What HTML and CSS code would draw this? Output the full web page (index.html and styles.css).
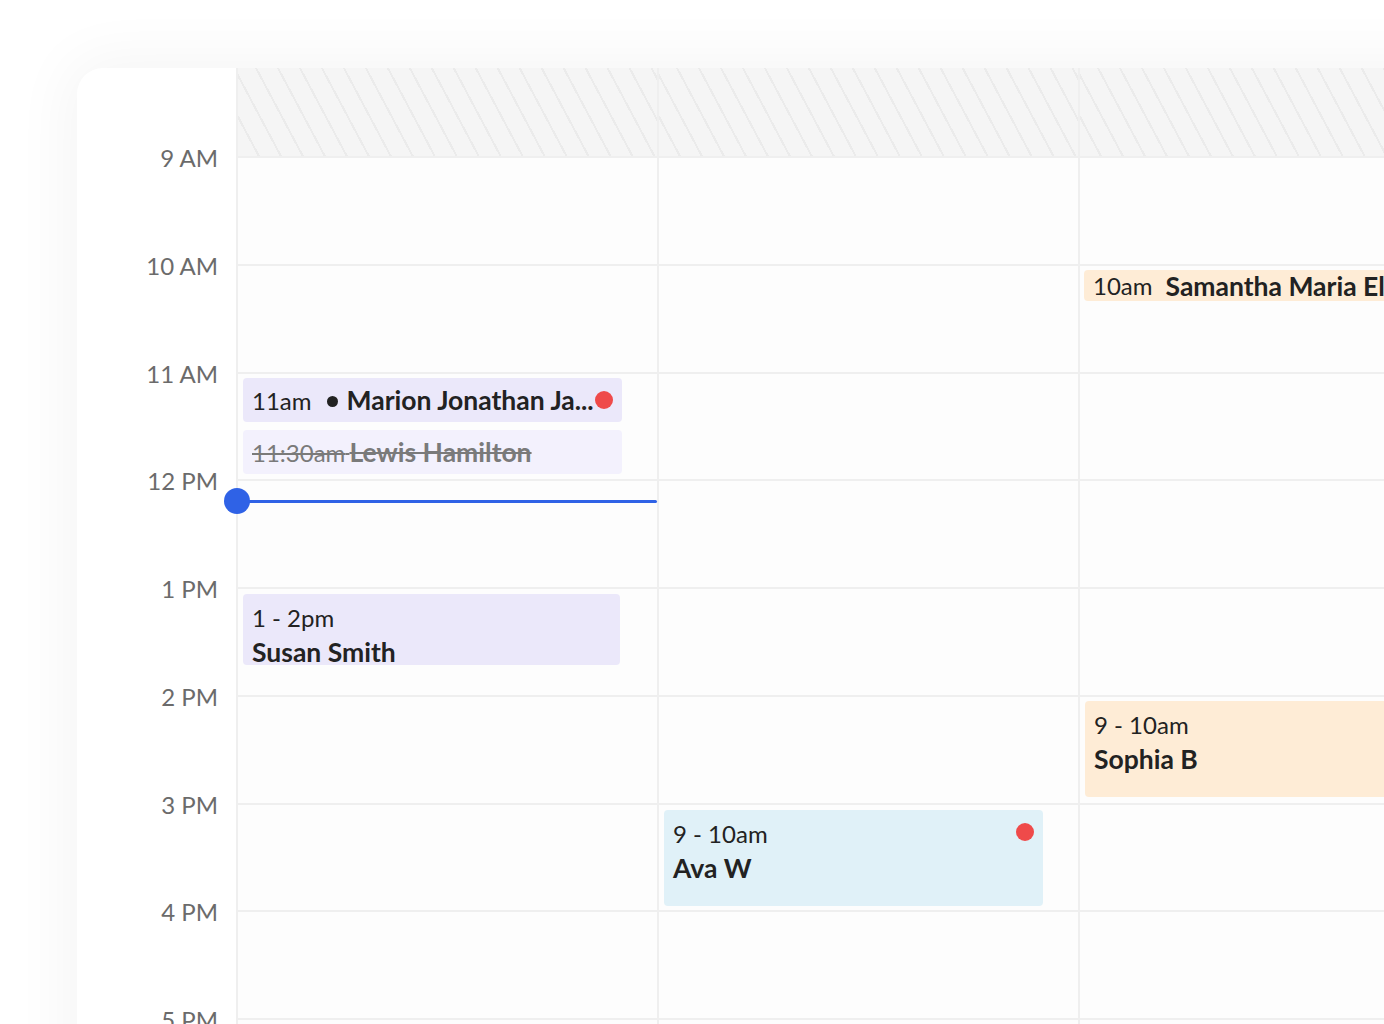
FILE: index.html
```html
<!DOCTYPE html>
<html>
<head>
<meta charset="utf-8">
<link rel="stylesheet" href="styles.css">
</head>
<body>
<div class="page">
  <div class="card">
    <div class="gutter">
      <div class="label">9 AM</div>
      <div class="label">10 AM</div>
      <div class="label">11 AM</div>
      <div class="label">12 PM</div>
      <div class="label">1 PM</div>
      <div class="label">2 PM</div>
      <div class="label">3 PM</div>
      <div class="label">4 PM</div>
      <div class="label">5 PM</div>
    </div>

    <div class="col">
      <div class="hatch"></div>
      <div class="day">
        <div class="slot"></div><div class="slot"></div><div class="slot"></div>
        <div class="slot"></div><div class="slot"></div><div class="slot"></div>
        <div class="slot"></div><div class="slot"></div><div class="slot"></div>

        <div class="event lilac row" style="top:222px">
          <span class="time">11am</span>
          <span class="bullet"></span>
          <span class="name">Marion Jonathan Ja...</span>
          <span class="dot"></span>
        </div>
        <div class="event lilac-light row cancelled" style="top:274px">
          <span class="time">11:30am</span>&nbsp;<span class="name">Lewis Hamilton</span>
        </div>
        <div class="now" style="top:344px"><span class="now-dot"></span></div>
        <div class="event lilac block short" style="top:438px">
          <div class="time">1 - 2pm</div>
          <div class="name">Susan Smith</div>
        </div>
      </div>
    </div>

    <div class="col">
      <div class="hatch"></div>
      <div class="day">
        <div class="slot"></div><div class="slot"></div><div class="slot"></div>
        <div class="slot"></div><div class="slot"></div><div class="slot"></div>
        <div class="slot"></div><div class="slot"></div><div class="slot"></div>

        <div class="event sky block" style="top:654px">
          <div class="time">9 - 10am</div>
          <div class="name">Ava W</div>
          <span class="dot dot-abs"></span>
        </div>
      </div>
    </div>

    <div class="col">
      <div class="hatch"></div>
      <div class="day">
        <div class="slot"></div><div class="slot"></div><div class="slot"></div>
        <div class="slot"></div><div class="slot"></div><div class="slot"></div>
        <div class="slot"></div><div class="slot"></div><div class="slot"></div>

        <div class="event peach row thin" style="top:114px">
          <span class="time">10am</span><span class="name gap">Samantha Maria Ellison</span>
        </div>
        <div class="event peach block" style="top:545px">
          <div class="time">9 - 10am</div>
          <div class="name">Sophia B</div>
        </div>
      </div>
    </div>
  </div>
</div>
</body>
</html>
```

FILE: styles.css
```css
html, body {
  margin: 0;
  padding: 0;
  background: #ffffff;
  overflow: hidden;
}

body {
  width: 1384px;
  height: 1024px;
  font-family: Lato, "Noto Sans", sans-serif;
  color: #222222;
}

.page {
  padding: 68px 0 0 77px;
  width: 1600px;
}

.card {
  display: flex;
  background: #ffffff;
  border-top-left-radius: 26px;
  box-shadow: 0 0 60px 10px rgba(0, 0, 0, 0.045);
  height: 1100px;
}

.gutter {
  width: 159px;
  flex: 0 0 159px;
  padding-top: 77px;
  box-sizing: border-box;
}

.label {
  height: 107.75px;
  line-height: 26px;
  font-size: 24px;
  color: #6b6b6b;
  text-align: right;
  padding-right: 18px;
}

.col {
  flex: 0 0 421px;
  width: 421px;
  border-left: 2px solid #efefef;
  box-sizing: border-box;
}

.hatch {
  height: 88px;
  background-color: #f5f5f5;
  background-image: repeating-linear-gradient(62deg, #f5f5f5 0px, #f5f5f5 17.4px, #ebebeb 17.4px, #ebebeb 19.4px);
}

.day {
  position: relative;
  background: #fdfdfd;
}

.slot {
  height: 105.75px;
  border-top: 2px solid #efefef;
}

.event {
  position: absolute;
  left: 5px;
  width: 379px;
  border-radius: 4px;
  box-sizing: border-box;
  color: #222222;
}

.event .time {
  font-size: 24px;
}

.event .name {
  font-size: 26.5px;
  font-weight: 700;
}

.event .gap {
  margin-left: 13px;
}

.event.row {
  height: 44px;
  display: flex;
  align-items: center;
  padding: 0 9px;
  white-space: nowrap;
}

.event.thin {
  height: 31px;
  width: 420px;
  left: 4px;
}

.event.block {
  height: 96px;
  padding: 6px 9px 0;
  line-height: 35px;
}

.event.short {
  height: 71px;
  width: 377px;
}

.lilac { background: #ebe8fa; }
.lilac-light { background: #f3f1fd; }
.peach { background: #feecd6; width: 420px; }
.sky { background: #e0f1f8; }

.bullet {
  width: 11px;
  height: 11px;
  border-radius: 50%;
  background: #222222;
  margin: 3px 9px 0 15px;
  flex: 0 0 11px;
}

.dot {
  width: 18px;
  height: 18px;
  border-radius: 50%;
  background: #ef4a4a;
  margin-left: auto;
  flex: 0 0 18px;
}

.dot-abs {
  position: absolute;
  top: 13px;
  right: 9px;
}

.cancelled {
  color: #7a7a7a;
  text-decoration: line-through;
  text-decoration-thickness: 2px;
}

.now {
  position: absolute;
  left: -1px;
  width: 420px;
  height: 3px;
  border-radius: 2px;
  background: #2f62e6;
}

.now-dot {
  position: absolute;
  left: -13px;
  top: -12px;
  width: 26px;
  height: 26px;
  border-radius: 50%;
  background: #2f62e6;
}
```
